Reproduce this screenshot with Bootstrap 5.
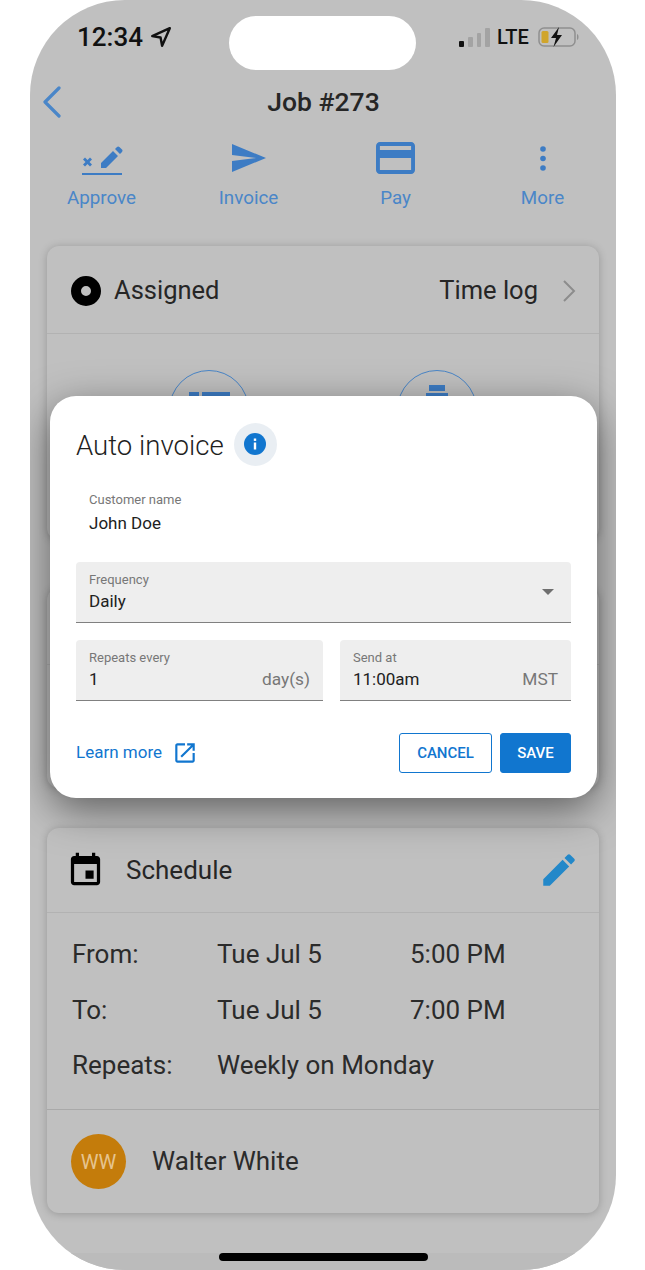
<!DOCTYPE html>
<html lang="en">
<head>
    <meta charset="UTF-8">
    <meta name="viewport" content="width=device-width, initial-scale=1.0">
    <title>Job #273</title>
    <link href="https://cdn.jsdelivr.net/npm/bootstrap@5.3.0/dist/css/bootstrap.min.css" rel="stylesheet">
    <style>
        html, body { height: 1270px; overflow: hidden; }
        body { background: #fff; font-family: Roboto, "Liberation Sans", sans-serif; color: #222; }
        .phone { position: relative; width: 586px; height: 1270px; margin-left: 30px; background: #c0c0c0; border-radius: 95px; overflow: hidden; padding: 16px 17px 0; }
        .status-row { height: 54px; padding: 0 0 0 30px; }
        .clock { font-size: 26px; font-weight: 500; color: #111; width: 152px; line-height: 1; margin-top: -12px; gap: 7px; }
        .island { width: 187px; height: 54px; background: #fff; border-radius: 27px; flex-shrink: 0; }
        .status-right { font-size: 20px; font-weight: 500; color: #111; margin-top: -12px; margin-left: 43px; line-height: 1; }
        .bars { gap: 4px; height: 19px; width: 31px; }
        .bars i { display: block; width: 4.750px; background: #a3a3a3; border-radius: 1px; }
        .bars .bar-1 { height: 6px; background: #111; }
        .bars .bar-2 { height: 10px; }
        .bars .bar-3 { height: 14px; }
        .bars .bar-4 { height: 19px; }
        .lte-text { margin: 0 9px 0 7px; }
        .title-row { height: 64px; margin: 0 -17px; }
        .job-title { font-size: 26.500px; font-weight: 500; color: #262626; margin-left: 1px; }
        .back-link { position: absolute; left: 12px; top: 86px; }
        .action-row { margin: 0 -17px 0 -19px; height: 112px; padding-top: 4px; }
        .action-tab { color: #4a86c8; font-size: 18.800px; line-height: 1; padding: 0; }
        .action-icon { height: 40px; margin-bottom: 11px; }
        .sheet-card { background: #c0c0c0; border: 0; border-radius: 12px; box-shadow: 0 1px 8px rgba(0, 0, 0, .22); }
        .sheet-head { background: transparent; border-bottom: 1px solid #b2b2b2; padding: 0 23px 0 24px; font-size: 25.500px; color: #262626; }
        .card-assigned { height: 294px; margin-bottom: 48px; }
        .card-assigned .sheet-head { height: 88px; padding-top: 2px; }
        .dot-ring { width: 30px; height: 30px; border: 10px solid #000; border-radius: 50%; margin-right: 13px; }
        .round-action { width: 80px; height: 80px; border: 1.500px solid #4a86c8; border-radius: 50%; }
        .round-row { gap: 148px; padding-top: 36px; }
        .icon-lines { margin-top: 21px; }
        .icon-timer { margin-top: 14px; }
        .card-middle { height: 200px; margin-bottom: 40px; }
        .card-middle .sheet-head { height: 77px; }
        .card-schedule .sheet-head { height: 85px; font-size: 26px; }
        .cal-icon { margin: 0 21px 0 -5px; }
        .edit-icon { margin-right: -4px; }
        .schedule-body { padding: 14px 25px 15px; font-size: 26px; color: #2b2b2b; border-bottom: 1px solid #a9a9a9; height: 197px; }
        .schedule-line { height: 55.500px; }
        .schedule-label { width: 145px; }
        .schedule-date { width: 193px; }
        .person-row { height: 103px; padding: 0 24px; font-size: 26px; color: #2b2b2b; }
        .person-face { width: 55px; height: 55px; background: #c47c0b; border-radius: 50%; color: #e6c48f; font-size: 20px; margin-right: 26px; }
        .home-strip { position: absolute; left: 0; right: 0; bottom: 0; height: 17px; background: #bbb; }
        .home-bar { width: 209px; height: 8px; background: #000; border-radius: 4px; }
        .invoice-sheet { position: absolute; left: 20px; top: 396px; width: 547px; height: 402px; background: #fff; border-radius: 26px; padding: 26px 26px 25px; box-shadow: 0 12px 40px rgba(0, 0, 0, .5); }
        .sheet-title { font-size: 27.600px; font-weight: 300; color: #1f1f1f; margin: 0; padding-top: 4px; line-height: 40px; }
        .info-badge { width: 43px; height: 43px; border-radius: 50%; background: #e9eef3; margin-left: 10px; }
        .plain-field { padding: 0 13px; height: 70px; margin-top: 26px; }
        .plain-field .field-value { margin-top: 5px; }
        .field-label { font-size: 13px; color: #777; line-height: 15px; }
        .field-value { font-size: 17px; color: #212121; line-height: 22px; margin-top: 3px; }
        .fill-field { background: #eee; border-bottom: 1px solid #808080; border-radius: 4px 4px 0 0; padding: 10px 13px 0; height: 61px; }
        .freq-field { margin-bottom: 17px; }
        .repeat-field { flex: 247px 0 0; margin-right: 17px; }
        .send-field { flex: 231px 0 0; }
        .field-suffix { font-size: 17.300px; color: #777; line-height: 22px; margin-top: 18px; }
        .caret-down { border-left: 6px solid transparent; border-right: 6px solid transparent; border-top: 6px solid #6f6f6f; margin: -10px 4px 0 0; }
        .sheet-foot { margin-top: 32px; }
        .learn-link { color: #1176cf; font-size: 17px; text-decoration: none; }
        .learn-icon { margin-left: 10px; }
        .btn-cancel, .btn-save { font-size: 15px; font-weight: 500; height: 40px; border-radius: 3px; padding: 0; line-height: 38px; }
        .btn-cancel { width: 93px; color: #1176cf; border: 1px solid #1176cf; background: #fff; }
        .btn-save { width: 71px; color: #fff; border: 1px solid #1176cf; background: #1176cf; }
    </style>
</head>
<body>
    <div class="phone">
        <!-- status bar -->
        <div class="status-row d-flex align-items-center">
            <div class="clock d-flex align-items-center">12:34
                <svg width="22" height="22" viewBox="0 0 20 20"><path d="M18 2 2 9.200l7.600 1.200L11 18z" fill="none" stroke="#111" stroke-width="2.200" stroke-linejoin="round"/></svg>
            </div>
            <div class="island"></div>
            <div class="status-right d-flex align-items-center">
                <div class="bars d-flex align-items-end">
                    <i class="bar-1"></i><i class="bar-2"></i><i class="bar-3"></i><i class="bar-4"></i>
                </div>
                <span class="lte-text">LTE</span>
                <svg width="42" height="20" viewBox="0 0 42 20">
                    <rect x="1" y="1" width="36" height="18" rx="5" fill="none" stroke="#8f8f8f" stroke-width="1.500"/>
                    <rect x="3.500" y="4" width="7" height="12" rx="1.500" fill="#d0a52c"/>
                    <path d="M39 7c2 .6 2 5.400 0 6z" fill="#8f8f8f"/>
                    <path d="M21 0 13 11h5l-2.500 9L24 8h-5z" fill="#111"/>
                </svg>
            </div>
        </div>

        <!-- header -->
        <div class="title-row d-flex align-items-center justify-content-center">
            <div class="job-title">Job #273</div>
        </div>
        <a class="back-link" href="#">
            <svg width="20" height="32" viewBox="0 0 20 32"><path d="M17 2 3 16l14 14" fill="none" stroke="#4a86c8" stroke-width="3.200" stroke-linecap="round" stroke-linejoin="round"/></svg>
        </a>

        <!-- actions -->
        <div class="action-row row g-0 text-center">
            <div class="col-3 action-tab">
                <div class="action-icon d-flex align-items-center justify-content-center">
                    <svg width="42" height="34" viewBox="0 0 42 34" fill="#3d7cc4">
                        <path d="M1 32h40v2.500H1z"/>
                        <path d="M2 18.500 4 16.500l2.500 2.500L9 16.500l2 2L8.500 21l2.500 2.500-2 2L6.500 23 4 25.500l-2-2L4.500 21z"/>
                        <path d="M20 22v5h5L37 15l-5-5zM34 8l5 5 2-2c.7-.7.7-1.700 0-2.400l-2.600-2.600c-.7-.7-1.700-.7-2.400 0z"/>
                    </svg>
                </div>
                Approve
            </div>
            <div class="col-3 action-tab">
                <div class="action-icon d-flex align-items-center justify-content-center">
                    <svg width="34" height="28" viewBox="2 3 21 18" fill="#3d7cc4" preserveAspectRatio="none"><path d="M2.010 21 23 12 2.010 3 2 10l15 2-15 2z"/></svg>
                </div>
                Invoice
            </div>
            <div class="col-3 action-tab">
                <div class="action-icon d-flex align-items-center justify-content-center">
                    <svg width="39" height="32" viewBox="2 4 20 16" fill="#3d7cc4" preserveAspectRatio="none"><path d="M20 4H4c-1.110 0-1.990.89-1.990 2L2 18c0 1.110.89 2 2 2h16c1.110 0 2-.89 2-2V6c0-1.110-.89-2-2-2zm0 14H4v-6h16v6zm0-10H4V6h16v2z"/></svg>
                </div>
                Pay
            </div>
            <div class="col-3 action-tab">
                <div class="action-icon d-flex align-items-center justify-content-center">
                    <svg width="8" height="25" viewBox="0 0 8 25" fill="#3d7cc4"><circle cx="4" cy="3" r="2.800"/><circle cx="4" cy="12.500" r="2.800"/><circle cx="4" cy="22" r="2.800"/></svg>
                </div>
                More
            </div>
        </div>

        <!-- status card, mostly behind the dialog -->
        <div class="card sheet-card card-assigned">
            <div class="sheet-head d-flex align-items-center">
                <div class="dot-ring"></div>
                <span class="flex-grow-1">Assigned</span>
                <span>Time log</span>
                <svg class="ms-4" width="14" height="24" viewBox="0 0 14 24"><path d="M2 2l10 10L2 22" fill="none" stroke="#8c8c8c" stroke-width="2"/></svg>
            </div>
            <div class="round-row d-flex justify-content-center">
                <div class="round-action d-flex justify-content-center">
                    <svg class="icon-lines" width="41" height="8" viewBox="0 0 41 8" fill="#3d7cc4"><path d="M0 0h10v8H0zM13 0h28v8H13z"/></svg>
                </div>
                <div class="round-action d-flex justify-content-center">
                    <svg class="icon-timer" width="24" height="14" viewBox="0 0 24 14" fill="#3d7cc4"><path d="M4 0h16v6H4zM1 8h22v6H1z"/></svg>
                </div>
            </div>
        </div>

        <div class="card sheet-card card-middle">
            <div class="sheet-head"></div>
        </div>

        <!-- schedule -->
        <div class="card sheet-card card-schedule">
            <div class="sheet-head d-flex align-items-center justify-content-between">
                <div class="d-flex align-items-center">
                    <svg class="cal-icon" width="39" height="39" viewBox="0 0 24 24" fill="#000"><path d="M17 12h-5v5h5v-5zM16 1v2H8V1H6v2H5c-1.110 0-1.990.9-1.990 2L3 19c0 1.100.89 2 2 2h14c1.100 0 2-.9 2-2V5c0-1.100-.9-2-2-2h-1V1h-2zm3 18H5V8h14v11z"/></svg>
                    <span>Schedule</span>
                </div>
                <svg class="edit-icon" width="42" height="42" viewBox="0 0 24 24" fill="#2388c9"><path d="M3 17.250V21h3.750L17.810 9.940l-3.750-3.750L3 17.250zM20.710 7.040c.39-.39.39-1.020 0-1.410l-2.340-2.340c-.39-.39-1.020-.39-1.410 0l-1.830 1.830 3.750 3.750 1.830-1.830z"/></svg>
            </div>
            <div class="schedule-body">
                <div class="schedule-line d-flex align-items-center">
                    <div class="schedule-label">From:</div><div class="schedule-date">Tue Jul 5</div><div>5:00 PM</div>
                </div>
                <div class="schedule-line d-flex align-items-center">
                    <div class="schedule-label">To:</div><div class="schedule-date">Tue Jul 5</div><div>7:00 PM</div>
                </div>
                <div class="schedule-line d-flex align-items-center">
                    <div class="schedule-label">Repeats:</div><div>Weekly on Monday</div>
                </div>
            </div>
            <div class="person-row d-flex align-items-center">
                <div class="person-face d-flex align-items-center justify-content-center">WW</div>
                <span>Walter White</span>
            </div>
        </div>

        <div class="home-strip d-flex justify-content-center">
            <div class="home-bar"></div>
        </div>

        <!-- dialog -->
        <div class="invoice-sheet">
            <div class="d-flex align-items-center">
                <h5 class="sheet-title">Auto invoice</h5>
                <div class="info-badge d-flex align-items-center justify-content-center">
                    <svg width="22" height="22" viewBox="0 0 22 22"><circle cx="11" cy="11" r="11" fill="#1176cf"/><rect x="9.800" y="9.500" width="2.400" height="7" fill="#fff"/><rect x="9.800" y="5.500" width="2.400" height="2.400" fill="#fff"/></svg>
                </div>
            </div>

            <div class="plain-field">
                <div class="field-label">Customer name</div>
                <div class="field-value">John Doe</div>
            </div>

            <div class="fill-field freq-field d-flex align-items-center justify-content-between">
                <div class="align-self-start">
                    <div class="field-label">Frequency</div>
                    <div class="field-value">Daily</div>
                </div>
                <div class="caret-down"></div>
            </div>

            <div class="d-flex">
                <div class="fill-field repeat-field d-flex justify-content-between">
                    <div>
                        <div class="field-label">Repeats every</div>
                        <div class="field-value">1</div>
                    </div>
                    <div class="field-suffix">day(s)</div>
                </div>
                <div class="fill-field send-field d-flex justify-content-between">
                    <div>
                        <div class="field-label">Send at</div>
                        <div class="field-value">11:00am</div>
                    </div>
                    <div class="field-suffix">MST</div>
                </div>
            </div>

            <div class="sheet-foot d-flex align-items-center justify-content-between">
                <a class="learn-link d-flex align-items-center" href="#">Learn more
                    <svg class="learn-icon" width="26" height="26" viewBox="0 0 24 24" fill="#1176cf"><path d="M19 19H5V5h7V3H5c-1.110 0-2 .9-2 2v14c0 1.100.89 2 2 2h14c1.100 0 2-.89 2-2v-7h-2v7zM14 3v2h3.590l-9.830 9.830 1.410 1.410L19 6.410V10h2V3h-7z"/></svg>
                </a>
                <div class="d-flex gap-2">
                    <button class="btn btn-cancel" type="button">CANCEL</button>
                    <button class="btn btn-save" type="button">SAVE</button>
                </div>
            </div>
        </div>
    </div>
</body>
</html>
